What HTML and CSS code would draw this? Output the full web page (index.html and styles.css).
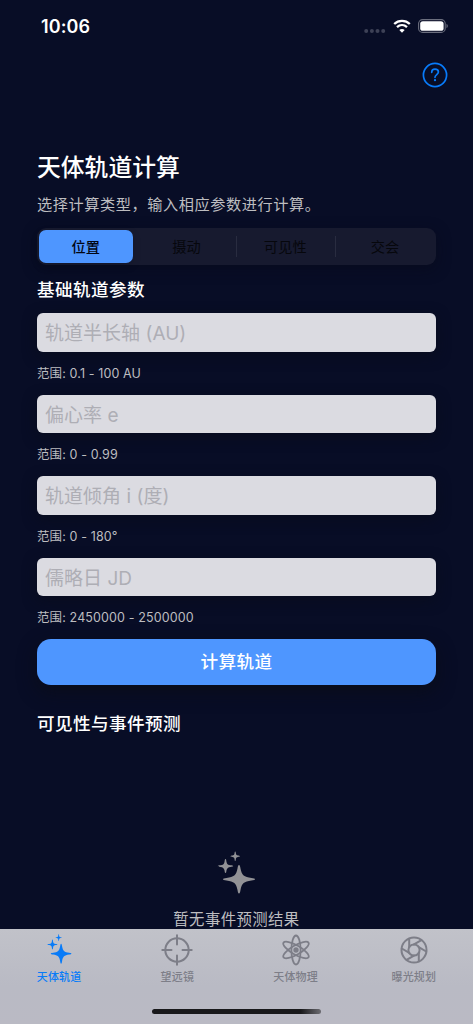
FILE: index.html
```html
<!DOCTYPE html>
<html lang="zh-CN">
<head>
<meta charset="utf-8">
<meta name="viewport" content="width=device-width, initial-scale=1">
<title>天体轨道计算</title>
<link rel="stylesheet" href="styles.css">
</head>
<body>
<svg class="defs" aria-hidden="true">
  <symbol id="sparkles" viewBox="0 0 39 43" preserveAspectRatio="none">
    <path d="M22 14C22.9 14 23.1 15.3 23.5 17.5C24.8 24.300 27 26 34.500 27C36.700 27.300 38 27.400 38 28.300S36.700 29.200 34.500 29.500C27 30.500 24.800 32.300 23.500 39C23.100 41.300 22.900 42.500 22 42.500S20.900 41.300 20.500 39C19.200 32.300 17 30.500 9.500 29.500C7.300 29.200 6 29.200 6 28.300S7.300 27.300 9.500 27C17 26 19.200 24.300 20.500 17.500C20.900 15.300 21.100 14 22 14Z"/>
    <path d="M8.500 8C9.300 8 9.200 9.500 9.500 11C10 13.400 11.200 14 13.500 14.300C15 14.500 16.200 14.400 16.200 15.100S15 15.700 13.500 15.900C11.200 16.300 10 17 9.500 19.200C9.200 20.800 9.300 22 8.500 22S7.800 20.800 7.500 19.200C7 17 5.800 16.300 3.500 15.900C2 15.700.8 15.800.8 15.100S2 14.500 3.500 14.300C5.800 14 7 13.400 7.500 11C7.800 9.500 7.700 8 8.500 8Z"/>
    <path d="M18.200.5C18.800.5 18.700 1.500 18.900 2.500C19.200 4 19.800 4.300 21 4.500C22 4.700 22.900 4.700 22.900 5.200S22 5.700 21 5.900C19.800 6.100 19.200 6.500 18.900 7.800C18.700 9 18.800 9.900 18.200 9.900S17.700 9 17.500 7.800C17.200 6.500 16.600 6.100 15.400 5.900C14.400 5.700 13.500 5.700 13.500 5.200S14.400 4.700 15.400 4.500C16.600 4.300 17.200 4 17.500 2.500C17.700 1.500 17.600.5 18.200.5Z"/>
  </symbol>
</svg>
<div class="screen">
  <header class="status">
    <span class="time">10:06</span>
    <span class="status-icons">
      <svg class="dots" viewBox="0 0 22 4"><circle cx="2.200" cy="2" r="2"/><circle cx="7.900" cy="2" r="2"/><circle cx="13.500" cy="2" r="2"/><circle cx="19.200" cy="2" r="2"/></svg>
      <svg class="wifi" viewBox="0 0 18 14"><path d="M1.200 5C5.600.8 12.400.8 16.800 5M4 8.100C6.900 5.500 11.100 5.500 14 8.100"/><path class="wifi-dot" d="M9 13.700L6.300 11C7.800 9.700 10.200 9.700 11.700 11Z"/></svg>
      <svg class="battery" viewBox="0 0 30 14"><rect class="shell" x=".6" y=".6" width="26.600" height="12.800" rx="4"/><rect class="charge" x="2.200" y="2.200" width="23.400" height="9.600" rx="2.600"/><path class="tip" d="M28.500 4.800Q29.800 5.500 29.800 7T28.500 9.200Z"/></svg>
    </span>
  </header>
  <nav class="toolbar">
    <svg class="help" viewBox="0 0 26 26"><circle cx="13" cy="13" r="11.600"/><path d="M9.700 10.300C9.700 8.200 11.100 7.200 13 7.200S16.400 8.300 16.400 10.100C16.400 12.500 13 12.700 13 15.300"/><circle class="help-dot" cx="13" cy="18.200" r="1.150"/></svg>
  </nav>
  <main class="content">
    <h1 class="title">天体轨道计算</h1>
    <p class="subtitle">选择计算类型，输入相应参数进行计算。</p>
    <div class="segments">
      <span class="segment selected">位置</span>
      <span class="segment">摄动</span>
      <span class="segment divided">可见性</span>
      <span class="segment divided">交会</span>
    </div>
    <h2 class="heading">基础轨道参数</h2>
    <div class="field">轨道半长轴 (AU)</div>
    <p class="hint">范围: 0.1 - 100 AU</p>
    <div class="field">偏心率 e</div>
    <p class="hint">范围: 0 - 0.99</p>
    <div class="field">轨道倾角 i (度)</div>
    <p class="hint">范围: 0 - 180°</p>
    <div class="field">儒略日 JD</div>
    <p class="hint">范围: 2450000 - 2500000</p>
    <div class="submit">计算轨道</div>
    <h2 class="heading events">可见性与事件预测</h2>
    <div class="empty">
      <svg class="empty-icon"><use href="#sparkles"/></svg>
      <p class="empty-text">暂无事件预测结果</p>
    </div>
  </main>
  <footer class="tabbar">
    <div class="tabs">
      <div class="tab active">
        <span class="tab-icon"><svg class="sparkle-icon"><use href="#sparkles"/></svg></span>
        <span class="tab-label">天体轨道</span>
      </div>
      <div class="tab">
        <span class="tab-icon"><svg class="line-icon" viewBox="0 0 32 32"><circle cx="16" cy="16" r="11.700"/><path d="M16 1.300V10.500M16 21.500V30.700M1.300 16H10.500M21.500 16H30.700"/></svg></span>
        <span class="tab-label">望远镜</span>
      </div>
      <div class="tab">
        <span class="tab-icon"><svg class="line-icon atom" viewBox="0 0 32 32"><ellipse cx="16" cy="16" rx="4.600" ry="14.500"/><ellipse cx="16" cy="16" rx="4.600" ry="14.500" transform="rotate(60 16 16)"/><ellipse cx="16" cy="16" rx="4.600" ry="14.500" transform="rotate(-60 16 16)"/><circle class="nucleus" cx="16" cy="16" r="2.700"/></svg></span>
        <span class="tab-label">天体物理</span>
      </div>
      <div class="tab">
        <span class="tab-icon"><svg class="line-icon aperture" viewBox="0 0 32 32"><circle cx="16" cy="16" r="12.500"/><circle cx="16" cy="16" r="5.600"/><path d="M11.200 13.200V4.700M16 10.400L23.400 6.100M20.800 13.200L28.200 17.500M20.800 18.800V27.300M16 21.600L8.600 25.900M11.200 18.800L3.800 14.500"/></svg></span>
        <span class="tab-label">曝光规划</span>
      </div>
    </div>
    <div class="home"></div>
  </footer>
</div>
</body>
</html>
```
FILE: styles.css
```css
* { box-sizing: border-box; }
body { margin: 0; background: #080d26; font-family: Inter, "Noto Sans CJK SC", sans-serif; }
h1, h2, p { margin: 0; }
svg { display: block; flex: none; }
.defs { display: none; }
.screen { display: flex; flex-direction: column; width: 473px; height: 1024px; overflow: hidden; background: #080d26; color: #fff; white-space: nowrap; }

.status { display: flex; flex: none; justify-content: space-between; height: 52px; padding: 0 24px 0 41px; align-items: center; }
.time { font-size: 18px; font-weight: 600; letter-spacing: .1px; }
.status-icons { display: flex; align-items: center; }
.dots { width: 22px; height: 4px; margin: 9px 7px 0 0; fill: #3d4156; }
.wifi { width: 18px; height: 14px; margin-right: 7px; fill: none; stroke: #fff; stroke-width: 2.300; }
.wifi-dot { fill: #fff; stroke: none; }
.battery { width: 30px; height: 14px; margin-right: 1px; }
.shell { fill: none; stroke: #6b6e7e; stroke-width: 1.100; }
.charge { fill: #fff; }
.tip { fill: #6b6e7e; }

.toolbar { display: flex; flex: none; justify-content: flex-end; height: 95px; padding: 10px 25px 0 0; }
.help { width: 26px; height: 26px; fill: none; stroke: #087bfa; stroke-width: 1.700; stroke-linecap: round; }
.help-dot { fill: #087bfa; stroke: none; }

.content { display: flex; flex: none; flex-direction: column; height: 782px; padding: 0 37px; overflow: hidden; }
.content > * { flex-shrink: 0; }
.title { height: 40px; font-size: 23.800px; line-height: 42px; font-weight: 500; }
.subtitle { height: 41px; padding-top: 7px; font-size: 15.200px; line-height: 22px; letter-spacing: .56px; color: #bdbdc0; }
.segments { display: grid; grid-template-columns: repeat(4, 1fr); height: 36.500px; padding: 2px 0; border-radius: 9px; background: #171a2f; box-shadow: 0 4px 14px rgba(7, 10, 24, .5); }
.segment { display: flex; align-items: center; justify-content: center; font-size: 14.200px; letter-spacing: .3px; color: #06070c; }
.selected { margin: 0 4px 0 2px; border-radius: 7px; background: #4e96ff; font-weight: 500; color: #020613; box-shadow: 0 3px 8px rgba(0, 0, 0, .15); }
.divided { margin-left: -1px; margin-right: 1px; }
.divided::before { content: ""; width: 1px; height: 21px; margin-right: auto; background: #292c40; }
.divided::after { content: ""; width: 1px; margin-left: auto; }
.heading { height: 48.500px; font-size: 17.600px; line-height: 49px; font-weight: 500; letter-spacing: .4px; }
.field { height: 38.500px; padding-left: 8px; border-radius: 6px; background: #dbdbe1; color: #aeaeb5; font-size: 19px; line-height: 41px; letter-spacing: .02px; box-shadow: 0 4px 14px rgba(9, 13, 28, .8); }
.hint { height: 43px; font-size: 12.500px; line-height: 43px; letter-spacing: .12px; color: #bdbdc0; }
.submit { height: 45.500px; border-radius: 14px; background: #4e96ff; font-size: 17.600px; line-height: 46.500px; font-weight: 500; letter-spacing: .4px; text-align: center; box-shadow: 0 7px 18px rgba(9, 13, 25, .95); }
.events { height: 77px; line-height: 77px; }
.empty { display: flex; flex-direction: column; align-items: center; padding-top: 89.500px; }
.empty-icon { width: 39px; height: 43px; fill: #929296; }
.empty-text { margin-top: 12px; font-size: 15.400px; line-height: 28px; letter-spacing: .4px; color: #bdbdc0; }

.tabbar { flex: none; height: 95px; background: linear-gradient(#c1c2c9, #b9bac4 60%, #babac4); }
.tabs { display: grid; grid-template-columns: repeat(4, 1fr); height: 79.500px; }
.tab { display: flex; flex-direction: column; align-items: center; color: #7d7e88; }
.tab-icon { display: flex; align-items: center; height: 32px; margin-top: 5px; }
.tab-label { margin-top: 1px; font-size: 11px; line-height: 20px; font-weight: 500; letter-spacing: .2px; }
.active { color: #087bf8; }
.sparkle-icon { width: 25px; height: 30px; margin-bottom: 2px; fill: currentColor; }
.line-icon { width: 32px; height: 32px; fill: none; stroke: currentColor; stroke-width: 2; stroke-linecap: round; }
.atom { stroke-width: 1.800; }
.nucleus { fill: currentColor; stroke: none; }
.home { width: 169px; height: 5.500px; margin: 0 auto; border-radius: 3px; background: linear-gradient(90deg, #19191b 88%, #6c6c72); }
```
